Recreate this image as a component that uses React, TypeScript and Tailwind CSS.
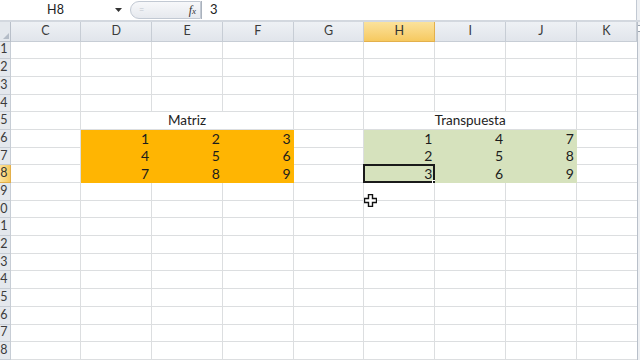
import React from 'react';

const COLS = ['C', 'D', 'E', 'F', 'G', 'H', 'I', 'J', 'K'];
const ROWS = Array.from({ length: 18 }, (_, i) => i + 1);

type Cell = { v?: string; fill?: 'gold' | 'green' };

// row -> column -> cell
const data: Record<number, Record<string, Cell>> = {
  6: {
    D: { v: '1', fill: 'gold' }, E: { v: '2', fill: 'gold' }, F: { v: '3', fill: 'gold' },
    H: { v: '1', fill: 'green' }, I: { v: '4', fill: 'green' }, J: { v: '7', fill: 'green' },
  },
  7: {
    D: { v: '4', fill: 'gold' }, E: { v: '5', fill: 'gold' }, F: { v: '6', fill: 'gold' },
    H: { v: '2', fill: 'green' }, I: { v: '5', fill: 'green' }, J: { v: '8', fill: 'green' },
  },
  8: {
    D: { v: '7', fill: 'gold' }, E: { v: '8', fill: 'gold' }, F: { v: '9', fill: 'gold' },
    H: { v: '3', fill: 'green' }, I: { v: '6', fill: 'green' }, J: { v: '9', fill: 'green' },
  },
};

const font = { fontFamily: 'Lato, "Open Sans", "Liberation Sans", sans-serif' };

function FormulaBar() {
  return (
    <div className="flex h-[22px] items-stretch border-b-[2px] border-[#d3d8df] bg-white">
      <div className="relative flex w-[128px] items-center">
        <span className="flex-1 pr-[4px] text-center text-[12.5px] text-[#222]">H8</span>
        <svg width="8" height="5" viewBox="0 0 8 5" className="mr-[5px]">
          <path d="M0 0 L7 0 L3.5 4 Z" fill="#333" />
        </svg>
      </div>
      <div className="my-[1px] ml-[2px] flex w-[71px] items-center rounded-l-full border border-[#c2c9d3] bg-gradient-to-b from-[#f7f8fa] to-[#e6e9ee] pl-[8px] pr-[4px]">
        <span className="text-[9px] text-[#c2c7cf]">=</span>
        <span className="ml-auto text-[12px] italic text-[#333]" style={{ fontFamily: '"Liberation Serif", serif' }}>
          f<span className="text-[9px]">x</span>
        </span>
      </div>
      <div className="my-[1px] flex flex-1 items-center border-l border-[#aab2bd] pl-[8px] text-[13px] text-[#222]">
        3
      </div>
      <div className="w-[4px] border-l border-[#c2c9d3] bg-[#eef0f3]" />
    </div>
  );
}

function cellClass(c: Cell | undefined) {
  if (c?.fill === 'gold') return 'bg-[#ffb502] border-[#ffb502]';
  if (c?.fill === 'green') return 'bg-[#d6e2bd] border-[#d6e2bd]';
  return 'bg-white border-[#dcdee0]';
}

export default function App() {
  return (
    <div className="relative h-[360px] w-[640px] overflow-hidden bg-white" style={font}>
      <FormulaBar />
      <div className="flex">
        <div className="grid flex-1 grid-cols-[10.5px_repeat(8,70.8px)_60px] grid-rows-[19.5px] auto-rows-[17.7px]">
          {/* header row */}
          <div className="flex items-end justify-end border-b border-r border-[#b9c0ca] bg-[#e4e8ed] pb-[2px] pr-[1px]">
            <svg width="6" height="6" viewBox="0 0 6 6">
              <path d="M6 0 L6 6 L0 6 Z" fill="#b4bcc7" />
            </svg>
          </div>
          {COLS.map((c) => (
            <div
              key={c}
              className={`flex items-center justify-center border-b border-r text-[12.5px] ${
                c === 'H'
                  ? 'border-[#e3b04c] bg-gradient-to-b from-[#fbe29b] to-[#f6c95f] text-[#333]'
                  : 'border-[#c7cdd5] bg-gradient-to-b from-[#eef1f5] to-[#e1e5eb] text-[#3b3b3b]'
              }`}
            >
              {c}
            </div>
          ))}

          {ROWS.map((r) => {
            const row = data[r] || {};
            return (
              <React.Fragment key={r}>
                <div
                  className={`flex items-center justify-end overflow-hidden border-b border-r pr-[2px] text-[12.5px] ${
                    r === 8
                      ? 'border-[#e3b04c] bg-gradient-to-r from-[#fbe29b] to-[#f6c95f] text-[#333]'
                      : 'border-[#c7cdd5] bg-[#e4e8ed] text-[#3b3b3b]'
                  }`}
                >
                  <span className="whitespace-nowrap">{r}</span>
                </div>
                {r === 5 ? (
                  <>
                    <div className="border-b border-r border-[#dcdee0]" />
                    <div className="col-span-3 flex items-center justify-center border-b border-r border-[#dcdee0] text-[13.5px] text-[#222]">
                      Matriz
                    </div>
                    <div className="border-b border-r border-[#dcdee0]" />
                    <div className="col-span-3 flex items-center justify-center border-b border-r border-[#dcdee0] text-[13.5px] text-[#222]">
                      Transpuesta
                    </div>
                    <div className="border-b border-[#dcdee0]" />
                  </>
                ) : (
                  COLS.map((c) => {
                    const cell = row[c];
                    const selected = r === 8 && c === 'H';
                    return (
                      <div
                        key={c}
                        className={`relative flex items-center justify-end border-b pr-[2px] text-[14px] text-[#1c1c1c] ${
                          c === 'K' ? '' : 'border-r'
                        } ${cellClass(cell)}`}
                      >
                        {cell?.v}
                        {selected && (
                          <>
                            <div className="absolute -left-[1px] -top-[1px] h-[19px] w-[72px] border-2 border-[#1a1a1a]" />
                            <div className="absolute -bottom-[3px] -right-[3px] h-[5px] w-[5px] border border-white bg-[#1a1a1a]" />
                          </>
                        )}
                      </div>
                    );
                  })
                )}
              </React.Fragment>
            );
          })}
        </div>
        <div className="w-[3.3px] border-l border-[#b9c0ca] bg-[#eef0f3]">
          <div className="mt-[3px] h-[7px] border-y border-[#9aa3ae] bg-white" />
        </div>
      </div>

      {/* mouse cursor */}
      <svg className="absolute left-[364px] top-[194px]" width="13" height="13" viewBox="0 0 13 13">
        <path
          d="M4.5 0.5 H8.5 V4.5 H12.5 V8.5 H8.5 V12.5 H4.5 V8.5 H0.5 V4.5 H4.5 Z"
          fill="#fff"
          stroke="#111"
          strokeWidth="1.4"
        />
      </svg>
    </div>
  );
}
